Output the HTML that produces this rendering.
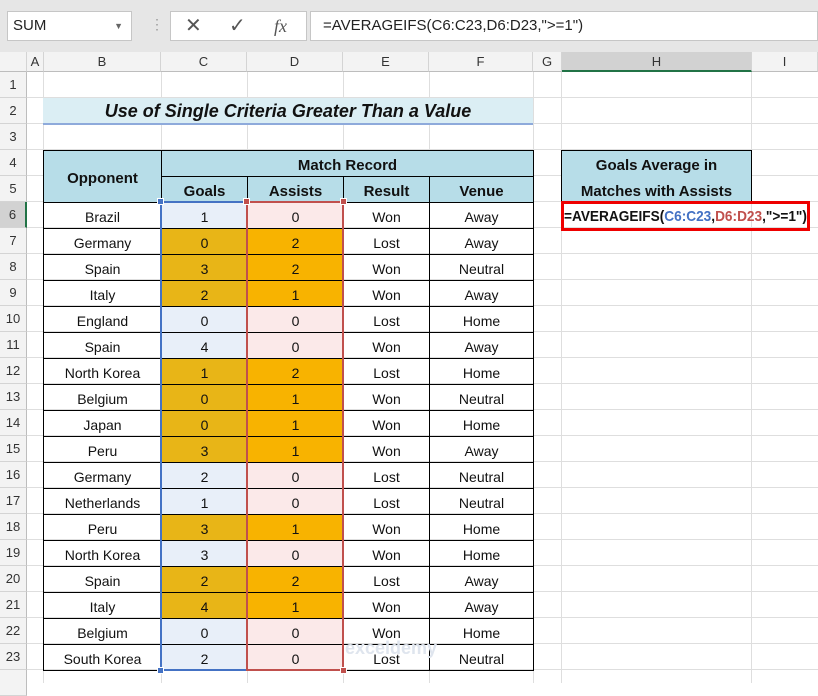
<!DOCTYPE html><html><head><style>
*{margin:0;padding:0;box-sizing:border-box}
body{width:818px;height:683px;overflow:hidden;background:#fff;font-family:"Liberation Sans",sans-serif;position:relative}
.a{position:absolute}
.top{left:0;top:0;width:818px;height:52px;background:#e6e6e6}
.box{background:#fff;border:1px solid #c6c6c6}
.ch{top:52px;height:20px;background:#f3f3f3;border-right:1px solid #d4d4d4;border-bottom:1px solid #bdbdbd;font-size:13px;color:#333;text-align:center;line-height:20px}
.rh{left:0;width:27px;height:26px;background:#f3f3f3;border-bottom:1px solid #d4d4d4;border-right:1px solid #bdbdbd;font-size:13px;color:#333;text-align:center;line-height:26px}
.vl{top:72px;width:1px;height:611px;background:#dedede}
table{border-collapse:collapse;table-layout:fixed;position:absolute;left:43px;top:150px}
td{border:1px solid #000;height:26px;text-align:center;font-size:14px;color:#111;padding:3px 0 0 0}
th{border:1px solid #000;background:#b7dde8;font-size:15px;font-weight:bold;color:#111;height:26px;padding-top:3px}
.g{background:#e8eff9}.p{background:#fbe9e9}
.G{background:#e8b517}.P{background:#f8b300}
</style></head><body>
<div class="a top"></div>
<div class="a box" style="left:7px;top:11px;width:125px;height:30px;font-size:15px;line-height:28px;padding-left:5px;color:#222">SUM<span style="position:absolute;right:8px;top:0;font-size:9px;color:#666">▼</span></div>
<div class="a" style="left:150px;top:16px;color:#999;font-size:14px">⋮</div>
<div class="a box" style="left:170px;top:11px;width:137px;height:30px;font-size:20px;color:#555;line-height:28px"><span style="position:absolute;left:14px">✕</span><span style="position:absolute;left:58px">✓</span><span style="position:absolute;left:103px;font-family:'Liberation Serif';font-style:italic;font-size:18px">fx</span></div>
<div class="a box" style="left:310px;top:11px;width:508px;height:30px;font-size:15px;line-height:28px;padding-left:12px;color:#222">=AVERAGEIFS(C6:C23,D6:D23,"&gt;=1")</div>
<div class="a ch" style="left:0;width:27px"></div>
<div class="a ch" style="left:27px;width:17px">A</div>
<div class="a ch" style="left:44px;width:117px">B</div>
<div class="a ch" style="left:161px;width:86px">C</div>
<div class="a ch" style="left:247px;width:96px">D</div>
<div class="a ch" style="left:343px;width:86px">E</div>
<div class="a ch" style="left:429px;width:104px">F</div>
<div class="a ch" style="left:533px;width:29px">G</div>
<div class="a ch" style="left:562px;width:190px;background:#d2d2d2;border-bottom:2px solid #217346">H</div>
<div class="a ch" style="left:752px;width:66px">I</div>
<div class="a" style="left:27px;top:72px;width:791px;height:611px;background:repeating-linear-gradient(to bottom,transparent 0,transparent 25px,#dedede 25px,#dedede 26px)"></div>
<div class="a vl" style="left:43px"></div><div class="a vl" style="left:161px"></div><div class="a vl" style="left:247px"></div><div class="a vl" style="left:343px"></div><div class="a vl" style="left:429px"></div><div class="a vl" style="left:533px"></div><div class="a vl" style="left:561px"></div><div class="a vl" style="left:751px"></div>
<div class="a rh" style="top:72px">1</div><div class="a rh" style="top:98px">2</div><div class="a rh" style="top:124px">3</div><div class="a rh" style="top:150px">4</div><div class="a rh" style="top:176px">5</div><div class="a rh" style="top:202px;background:#d2d2d2;border-right:2px solid #217346">6</div><div class="a rh" style="top:228px">7</div><div class="a rh" style="top:254px">8</div><div class="a rh" style="top:280px">9</div><div class="a rh" style="top:306px">10</div><div class="a rh" style="top:332px">11</div><div class="a rh" style="top:358px">12</div><div class="a rh" style="top:384px">13</div><div class="a rh" style="top:410px">14</div><div class="a rh" style="top:436px">15</div><div class="a rh" style="top:462px">16</div><div class="a rh" style="top:488px">17</div><div class="a rh" style="top:514px">18</div><div class="a rh" style="top:540px">19</div><div class="a rh" style="top:566px">20</div><div class="a rh" style="top:592px">21</div><div class="a rh" style="top:618px">22</div><div class="a rh" style="top:644px">23</div><div class="a rh" style="top:670px"></div>
<div class="a" style="left:43px;top:98px;width:490px;height:27px;background:#dbeef4;border-bottom:2px solid #8eaadb;text-align:center;font-size:18px;font-weight:bold;font-style:italic;line-height:27px;color:#111">Use of Single Criteria Greater Than a Value</div>
<table>
<colgroup><col style="width:118px"><col style="width:86px"><col style="width:96px"><col style="width:86px"><col style="width:104px"></colgroup>
<tr><th rowspan="2">Opponent</th><th colspan="4">Match Record</th></tr>
<tr><th>Goals</th><th>Assists</th><th>Result</th><th>Venue</th></tr>
<tr><td>Brazil</td><td class="g">1</td><td class="p">0</td><td>Won</td><td>Away</td></tr>
<tr><td>Germany</td><td class="G">0</td><td class="P">2</td><td>Lost</td><td>Away</td></tr>
<tr><td>Spain</td><td class="G">3</td><td class="P">2</td><td>Won</td><td>Neutral</td></tr>
<tr><td>Italy</td><td class="G">2</td><td class="P">1</td><td>Won</td><td>Away</td></tr>
<tr><td>England</td><td class="g">0</td><td class="p">0</td><td>Lost</td><td>Home</td></tr>
<tr><td>Spain</td><td class="g">4</td><td class="p">0</td><td>Won</td><td>Away</td></tr>
<tr><td>North Korea</td><td class="G">1</td><td class="P">2</td><td>Lost</td><td>Home</td></tr>
<tr><td>Belgium</td><td class="G">0</td><td class="P">1</td><td>Won</td><td>Neutral</td></tr>
<tr><td>Japan</td><td class="G">0</td><td class="P">1</td><td>Won</td><td>Home</td></tr>
<tr><td>Peru</td><td class="G">3</td><td class="P">1</td><td>Won</td><td>Away</td></tr>
<tr><td>Germany</td><td class="g">2</td><td class="p">0</td><td>Lost</td><td>Neutral</td></tr>
<tr><td>Netherlands</td><td class="g">1</td><td class="p">0</td><td>Lost</td><td>Neutral</td></tr>
<tr><td>Peru</td><td class="G">3</td><td class="P">1</td><td>Won</td><td>Home</td></tr>
<tr><td>North Korea</td><td class="g">3</td><td class="p">0</td><td>Won</td><td>Home</td></tr>
<tr><td>Spain</td><td class="G">2</td><td class="P">2</td><td>Lost</td><td>Away</td></tr>
<tr><td>Italy</td><td class="G">4</td><td class="P">1</td><td>Won</td><td>Away</td></tr>
<tr><td>Belgium</td><td class="g">0</td><td class="p">0</td><td>Won</td><td>Home</td></tr>
<tr><td>South Korea</td><td class="g">2</td><td class="p">0</td><td>Lost</td><td>Neutral</td></tr>
</table>
<div class="a" style="left:160px;top:201px;width:88px;height:470px;border:2px solid #4472c4"></div>
<div class="a" style="left:246px;top:201px;width:98px;height:470px;border:2px solid #c0504d"></div>
<div class="a" style="left:157px;top:198px;width:7px;height:7px;background:#4472c4;border:1px solid #fff"></div>
<div class="a" style="left:243px;top:198px;width:7px;height:7px;background:#c0504d;border:1px solid #fff"></div>
<div class="a" style="left:340px;top:198px;width:7px;height:7px;background:#c0504d;border:1px solid #fff"></div>
<div class="a" style="left:157px;top:667px;width:7px;height:7px;background:#4472c4;border:1px solid #fff"></div>
<div class="a" style="left:340px;top:667px;width:7px;height:7px;background:#c0504d;border:1px solid #fff"></div>
<div class="a" style="left:561px;top:150px;width:191px;height:53px;background:#b7dde8;border:1px solid #000;text-align:center;font-size:15px;font-weight:bold;line-height:26px;padding-top:2px;color:#111">Goals Average in<br>Matches with Assists</div>
<div class="a" style="left:561px;top:201px;width:249px;height:30px;border:3px solid #e00;overflow:hidden"><div style="font-size:15px;font-weight:bold;line-height:25px;color:#111;white-space:nowrap;transform:scaleX(0.91);transform-origin:0 0">=AVERAGEIFS(<span style="color:#4472c4">C6:C23</span>,<span style="color:#c0504d">D6:D23</span>,"&gt;=1")</div></div>
<div class="a" style="left:345px;top:638px;font-size:18px;color:#dfe5ee;font-weight:bold">exceldemy</div>
</body></html>
